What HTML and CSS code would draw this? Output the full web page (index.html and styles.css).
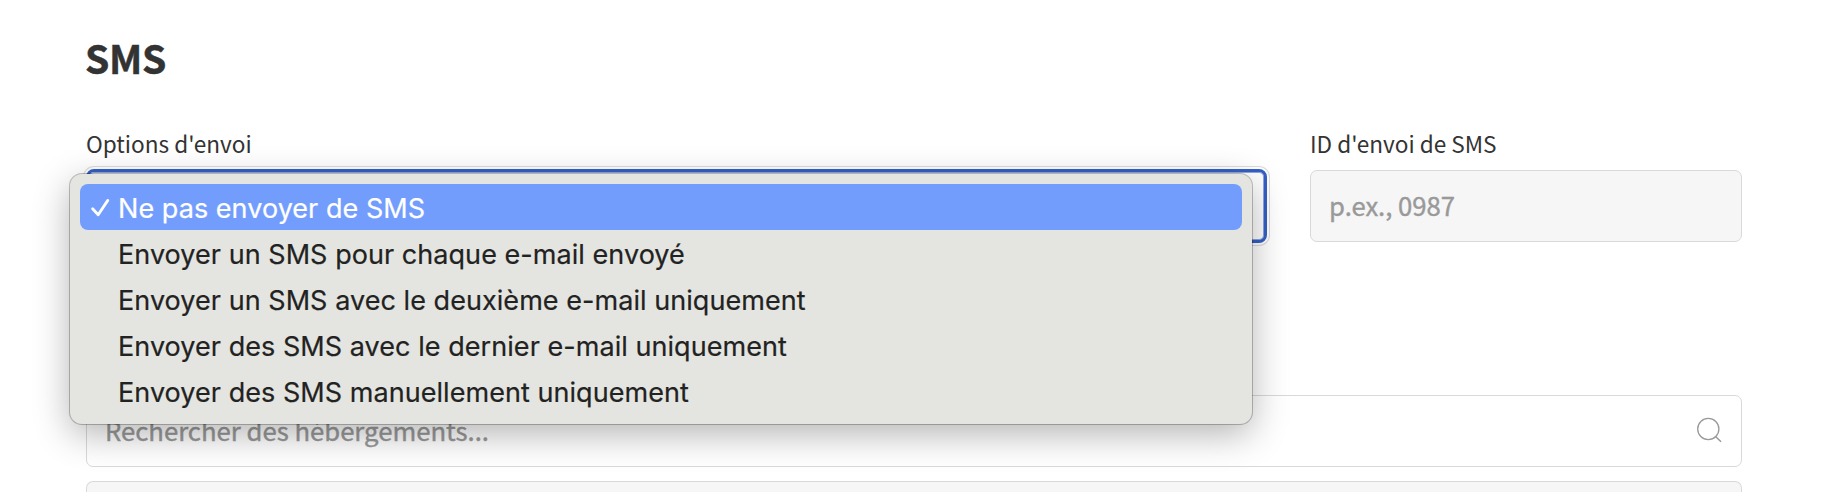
FILE: index.html
```html
<!DOCTYPE html>
<html lang="fr">
<head>
    <meta charset="UTF-8">
    <meta name="viewport" content="width=device-width, initial-scale=1.0">
    <title>SMS</title>
    <link rel="stylesheet" href="styles.css">
</head>
<body>
    <main class="settings">
        <h1 class="title">SMS</h1>

        <div class="form-row">
            <div class="field">
                <div class="label">Options d'envoi</div>
                <div class="select">
                    <ul class="menu">
                        <li class="option selected">
                            <svg class="check" width="22" height="22" viewBox="0 0 22 22">
                                <path d="M2.6 11.8 L8.2 17.8 L17.8 3.4" fill="none" stroke="#fff" stroke-width="2.8" stroke-linecap="round" stroke-linejoin="round"/>
                            </svg>
                            <span>Ne pas envoyer de SMS</span>
                        </li>
                        <li class="option">Envoyer un SMS pour chaque e-mail envoyé</li>
                        <li class="option">Envoyer un SMS avec le deuxième e-mail uniquement</li>
                        <li class="option">Envoyer des SMS avec le dernier e-mail uniquement</li>
                        <li class="option">Envoyer des SMS manuellement uniquement</li>
                    </ul>
                </div>
            </div>
            <div class="field">
                <div class="label">ID d'envoi de SMS</div>
                <div class="input disabled"><span>p.ex., 0987</span></div>
            </div>
        </div>

        <div class="input search">
            <span>Rechercher des hébergements...</span>
            <svg class="search-icon" width="28" height="28" viewBox="0 0 28 28">
                <circle cx="12.3" cy="12" r="10.6" fill="none" stroke="#999" stroke-width="1.3"/>
                <path d="M19.3 19.2 L25 24.8" fill="none" stroke="#999" stroke-width="1.5"/>
            </svg>
        </div>

        <div class="panel"></div>
    </main>
</body>
</html>
```
FILE: styles.css
```css
* {
    margin: 0;
    padding: 0;
    box-sizing: border-box;
}

body {
    background-color: #fff;
    color: #333;
    font-family: "Noto Sans CJK SC", "Noto Sans", sans-serif;
}

.settings {
    display: flex;
    flex-direction: column;
    height: 492px;
    padding: 28px 80px 0 86px;
    overflow: hidden;
}

.title {
    height: 60px;
    line-height: 58px;
    margin-left: -1px;
    font-size: 39px;
    font-weight: 700;
    letter-spacing: -0.3px;
    -webkit-text-stroke: 0.5px #333;
}

.form-row {
    display: grid;
    grid-template-columns: 1181px 432px;
    gap: 43px;
    padding-top: 37px;
}

.label {
    height: 36px;
    line-height: 38px;
    margin-bottom: 9px;
    font-size: 22.6px;
}

.select {
    position: relative;
    height: 74px;
    margin-top: -1px;
    background-color: #fff;
    border: 3px solid #3560c4;
    border-radius: 8px;
    box-shadow: inset 0 0 0 1px #8ea7e0, 0 0 0 2px #fff, 0 0 0 3px #ddd;
}

/* dropdown list, opens over the select */
.menu {
    position: absolute;
    top: 2px;
    left: -19px;
    z-index: 2;
    width: 1182px;
    padding: 10px;
    list-style: none;
    background-color: #e4e5e0;
    border-radius: 12px;
    box-shadow: 0 0 0 1px rgba(0, 0, 0, 0.24), 0 10px 36px rgba(0, 0, 0, 0.3);
    font-family: Inter, "Liberation Sans", sans-serif;
    font-size: 27px;
    letter-spacing: 0.05px;
    color: #222;
    -webkit-text-stroke: 0.2px currentColor;
}

.option {
    display: flex;
    align-items: center;
    height: 46px;
    padding: 2px 0 0 38px;
    white-space: nowrap;
}

.option.selected {
    padding-left: 10px;
    background-color: #739dfd;
    border-radius: 8px;
    color: #fff;
}

.check {
    margin-right: 6px;
}

.input {
    display: flex;
    align-items: center;
    height: 72px;
    padding: 0 17px 0 18px;
    border: 1px solid #d9d9d9;
    border-radius: 7px;
    background-color: #fff;
    color: #999;
    font-size: 25.7px;
    -webkit-text-stroke: 0.4px #999;
}

.input span {
    margin-top: -3px;
}

.disabled {
    background-color: #f6f6f6;
}

.search {
    margin-top: 152px;
}

.search-icon {
    margin-left: auto;
}

.panel {
    flex: 1;
    margin-top: 14px;
    border: 1px solid #d9d9d9;
    border-bottom: none;
    border-radius: 7px 7px 0 0;
    background-color: #f6f6f6;
}
```
